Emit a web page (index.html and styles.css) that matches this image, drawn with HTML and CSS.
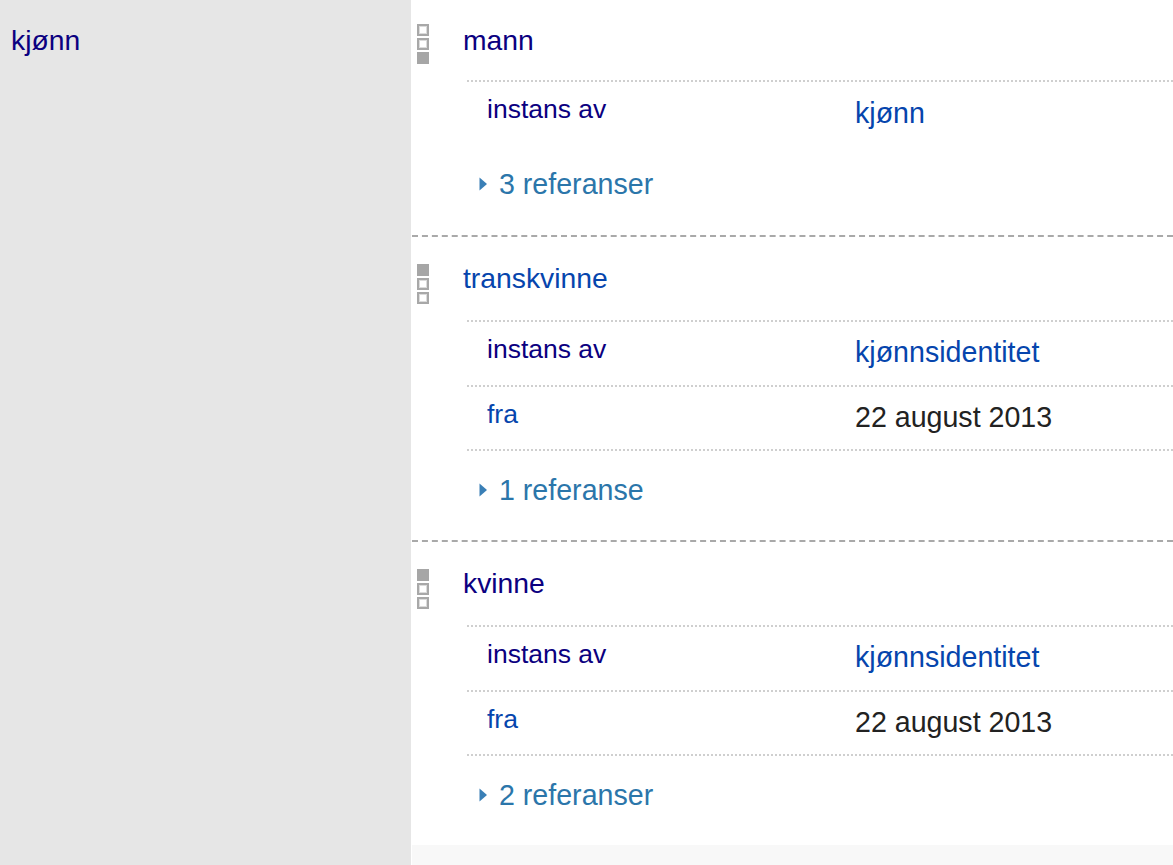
FILE: index.html
```html
<!DOCTYPE html>
<html lang="nb">
<head>
<meta charset="utf-8">
<title>kjønn</title>
<link rel="stylesheet" href="styles.css">
</head>
<body>
<div class="page">
  <aside class="prop">
    <a class="visited" href="#">kjønn</a>
  </aside>
  <main class="group">
    <div class="statements">
      <section class="statement first">
        <div class="rank"><span class="sq"></span><span class="sq"></span><span class="sq on"></span></div>
        <div class="body">
          <a class="mainsnak visited" href="#">mann</a>
          <div class="quals">
            <div class="qrow">
              <a class="qprop visited" href="#">instans av</a>
              <a class="qval link" href="#">kjønn</a>
            </div>
          </div>
          <div class="refs">
            <svg class="tri" width="9" height="14" viewBox="0 0 9 14"><polygon points="0.5,0.5 8,7 0.5,13.5" fill="#3a7fb6"/></svg>
            <span>3 referanser</span>
          </div>
        </div>
      </section>

      <section class="statement">
        <div class="rank"><span class="sq on"></span><span class="sq"></span><span class="sq"></span></div>
        <div class="body">
          <a class="mainsnak link" href="#">transkvinne</a>
          <div class="quals closed">
            <div class="qrow">
              <a class="qprop visited" href="#">instans av</a>
              <a class="qval link" href="#">kjønnsidentitet</a>
            </div>
            <div class="qrow">
              <a class="qprop link" href="#">fra</a>
              <span class="qval plain">22 august 2013</span>
            </div>
          </div>
          <div class="refs">
            <svg class="tri" width="9" height="14" viewBox="0 0 9 14"><polygon points="0.5,0.5 8,7 0.5,13.5" fill="#3a7fb6"/></svg>
            <span>1 referanse</span>
          </div>
        </div>
      </section>

      <section class="statement last">
        <div class="rank"><span class="sq on"></span><span class="sq"></span><span class="sq"></span></div>
        <div class="body">
          <a class="mainsnak visited" href="#">kvinne</a>
          <div class="quals closed">
            <div class="qrow">
              <a class="qprop visited" href="#">instans av</a>
              <a class="qval link" href="#">kjønnsidentitet</a>
            </div>
            <div class="qrow">
              <a class="qprop link" href="#">fra</a>
              <span class="qval plain">22 august 2013</span>
            </div>
          </div>
          <div class="refs">
            <svg class="tri" width="9" height="14" viewBox="0 0 9 14"><polygon points="0.5,0.5 8,7 0.5,13.5" fill="#3a7fb6"/></svg>
            <span>2 referanser</span>
          </div>
        </div>
      </section>
    </div>
  </main>
</div>
</body>
</html>
```

FILE: styles.css
```css
html, body {
  margin: 0;
  padding: 0;
  height: 100%;
}

body {
  font-family: "Liberation Sans", Arial, Helvetica, sans-serif;
  background: #ffffff;
}

a {
  text-decoration: none;
}

.visited {
  color: #0b0080;
}

.link {
  color: #0645ad;
}

.page {
  display: flex;
  min-height: 865px;
}

.prop {
  width: 411px;
  flex: none;
  background: #e6e6e6;
  box-sizing: border-box;
  padding: 23px 0 0 11px;
  font-size: 28.3px;
  line-height: 34px;
}

.group {
  flex: 1;
  background: #f8f8f8;
  border-left: 1px solid #ffffff;
}

.statements {
  background: #ffffff;
}

.statement {
  display: flex;
  padding: 24px 0 0 5px;
  border-bottom: 2px dashed #a9a9a9;
}

.statement.first {
  padding-top: 23px;
}

.statement.last {
  border-bottom: none;
}

.rank {
  width: 12px;
  flex: none;
  margin-top: 3px;
  display: flex;
  flex-direction: column;
  gap: 2px;
}

.statement.first .rank {
  margin-top: 1px;
}

.sq {
  display: block;
  width: 12px;
  height: 12px;
  box-sizing: border-box;
  border: 2px solid #a8a8a8;
  background: #ffffff;
  box-shadow: inset 0 0 0 1px #dcdcdc;
}

.sq.on {
  border-color: #a6a6a6;
  background: #a6a6a6;
  box-shadow: none;
}

.body {
  flex: 1;
  margin-left: 34px;
  display: flex;
  flex-direction: column;
}

.mainsnak {
  font-size: 28.3px;
  line-height: 34px;
  align-self: flex-start;
}

.quals {
  margin: 25px 0 0 4px;
}

.statement.first .quals {
  margin-top: 23px;
}

.qrow {
  display: flex;
  align-items: flex-start;
  height: 65px;
  box-sizing: border-box;
  padding: 12px 0 0 20px;
  border-top: 2px dotted #cfcfcf;
}

.quals.closed .qrow:last-child {
  border-bottom: 2px dotted #cfcfcf;
  height: 66px;
}

.qprop {
  width: 368px;
  flex: none;
  font-size: 26.5px;
  line-height: 30px;
}

.qval {
  font-size: 28.6px;
  line-height: 34px;
  margin-top: 1px;
}

.statement.first .qval {
  margin-top: 2px;
}

.qval.plain {
  color: #222222;
}

.refs {
  display: flex;
  align-items: center;
  gap: 11px;
  padding: 22px 0 33px 16px;
  font-size: 28.6px;
  line-height: 34px;
  color: #2b76aa;
}

.statement.first .refs {
  padding-bottom: 34px;
}

.tri {
  flex: none;
  display: block;
}
```
